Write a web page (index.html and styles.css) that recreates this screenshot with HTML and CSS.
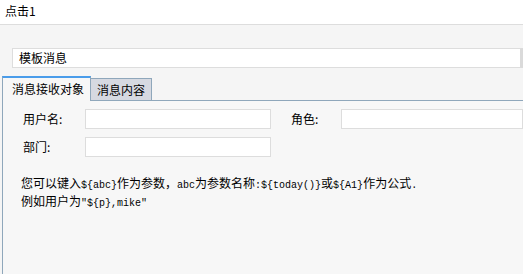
FILE: index.html
```html
<!DOCTYPE html>
<html lang="zh">
<head>
<meta charset="utf-8">
<link rel="stylesheet" href="styles.css">
</head>
<body>
<div class="header">点击1</div>
<div class="main">
  <div class="title-box">模板消息</div>
  <div class="tabs">
    <div class="tab active">消息接收对象</div>
    <div class="tab">消息内容</div>
  </div>
  <div class="panel">
    <div class="form">
      <label class="lbl">用户名:</label>
      <div class="inp"></div>
      <label class="lbl">角色:</label>
      <div class="inp wide"></div>
      <label class="lbl">部门:</label>
      <div class="inp"></div>
    </div>
    <div class="desc">
      <div>您可以键入<span class="lt">${abc}</span>作为参数，<span class="lt">abc</span>为参数名称<span class="lt">:${today()}</span>或<span class="lt">${A1}</span>作为公式<span class="lt">.</span></div>
      <div>例如用户为<span class="lt">"${p},mike"</span></div>
    </div>
  </div>
</div>
</body>
</html>
```
FILE: styles.css
```css
html, body {
  margin: 0;
  padding: 0;
  background: #f5f5f5;
  font-family: "Noto Sans CJK SC", "Liberation Sans", sans-serif;
  font-size: 12px;
  color: #000;
  overflow: hidden;
}
body {
  height: 274px;
}
.header {
  height: 25px;
  line-height: 21px;
  background: #fff;
  border-bottom: 1px solid #dddddd;
  padding-left: 5px;
  box-sizing: border-box;
}
.main {
  padding-top: 23px;
}
.title-box {
  margin-left: 12px;
  height: 20px;
  box-sizing: border-box;
  background: #fff;
  border: 1px solid #dddddd;
  border-right: 3px solid #dadada;
  padding-left: 6px;
  line-height: 18px;
}
.tabs {
  display: flex;
  align-items: flex-end;
  margin-top: 7px;
  margin-left: 2px;
  height: 25px;
}
.tab {
  box-sizing: border-box;
  height: 22px;
  padding: 0 6px;
  line-height: 22px;
  background: #d6d9e1;
  border: 1px solid #8fa7bb;
  border-bottom: none;
  border-left: none;
}
.tab.active {
  height: 25px;
  width: 89px;
  padding: 0 0 0 9px;
  line-height: 21px;
  background: #f7f7f7;
  border-top: 2px solid #4a9cea;
  border-left: 1px solid #8fa7bb;
  border-right: 1px solid #8fa7bb;
  position: relative;
  z-index: 1;
  margin-bottom: -1px;
}
.panel {
  margin-left: 2px;
  background: #f7f7f7;
  border-top: 1px solid #8fa7bb;
  border-left: 1px solid #8fa7bb;
  height: 174px;
  box-sizing: border-box;
  padding-top: 8px;
}
.form {
  display: grid;
  grid-template-columns: 62px 206px 50px 1fr;
  row-gap: 8px;
  padding-left: 20px;
}
.lbl {
  line-height: 20px;
}
.inp {
  width: 186px;
  height: 20px;
  box-sizing: border-box;
  background: #fff;
  border: 1px solid #dddddd;
}
.inp.wide {
  width: auto;
}
.desc {
  margin-top: 18px;
  padding-left: 18px;
  line-height: 15px;
}
.lt {
  font-family: "Liberation Mono", monospace;
  font-size: 10px;
}
```
